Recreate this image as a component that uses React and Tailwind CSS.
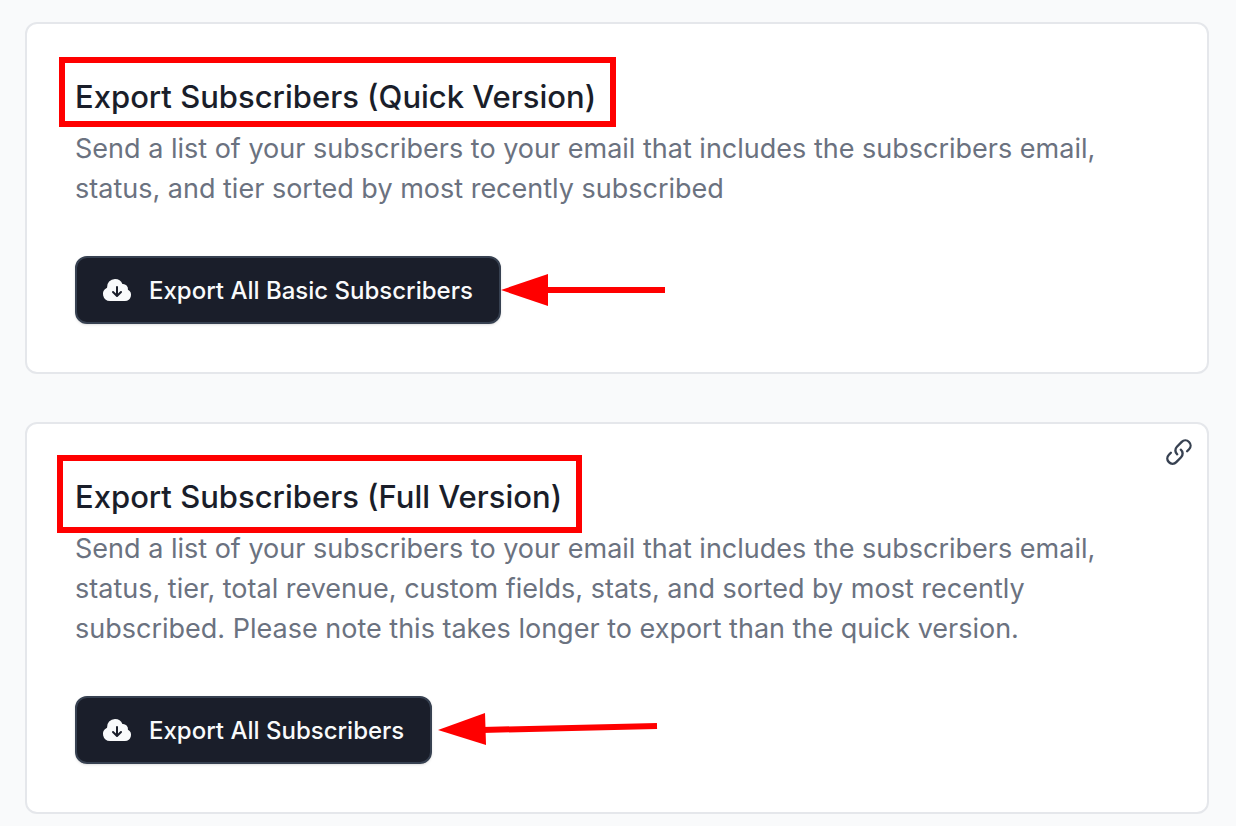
import React from "react";

function CloudIcon() {
  return (
    <svg viewBox="0 0 24 24" className="size-8 shrink-0" fill="currentColor" aria-hidden="true">
      <path fillRule="evenodd" clipRule="evenodd" d="M10.5 3.75a6 6 0 0 0-5.98 6.496A5.25 5.25 0 0 0 6.75 20.25H18a4.5 4.5 0 0 0 2.206-8.423 3.75 3.75 0 0 0-4.133-4.303A6.001 6.001 0 0 0 10.5 3.75Zm2.25 6a.75.75 0 0 0-1.5 0v4.94l-1.72-1.72a.75.75 0 0 0-1.06 1.06l3 3a.75.75 0 0 0 1.06 0l3-3a.75.75 0 1 0-1.06-1.06l-1.72 1.72V9.75Z" />
    </svg>
  );
}

function LinkIcon() {
  return (
    <svg viewBox="0 0 20 20" className="size-8" fill="currentColor" aria-hidden="true">
      <path d="M12.232 4.232a2.5 2.5 0 0 1 3.536 3.536l-1.225 1.224a.75.75 0 0 0 1.061 1.06l1.224-1.224a4 4 0 0 0-5.656-5.656l-3 3a4 4 0 0 0 .225 5.865.75.75 0 0 0 .977-1.138 2.5 2.5 0 0 1-.142-3.667l3-3Z" />
      <path d="M11.603 7.963a.75.75 0 0 0-.977 1.138 2.5 2.5 0 0 1 .142 3.667l-3 3a2.5 2.5 0 0 1-3.536-3.536l1.225-1.224a.75.75 0 0 0-1.061-1.06l-1.224 1.224a4 4 0 1 0 5.656 5.656l3-3a4 4 0 0 0-.225-5.865Z" />
    </svg>
  );
}

function Card({ title, text, action, frame, arrow, link }) {
  return (
    <section className="relative rounded-xl border-2 border-[#e5e7eb] bg-white px-12 pt-[49px] pb-12">
      <h2 className="relative w-fit text-[31px] leading-12 font-medium text-[#1a1e2a]">
        {title}
        <span className={`pointer-events-none absolute border-[6px] border-[#ff0000] ${frame}`} />
      </h2>
      <p className="mt-2 max-w-[1040px] text-[27px] leading-10 text-[#6b7280]">{text}</p>
      <div className="relative mt-[47px] w-fit">
        <button type="button" className="flex h-17 items-center gap-4 rounded-xl border-2 border-[#374151] bg-[#1a1e2a] pr-[26px] pl-6 text-2xl font-medium text-[#f9fafb] shadow-sm">
          <CloudIcon />
          <span className="pt-0.5">{action}</span>
        </button>
        {arrow}
      </div>
      {link && (
        <a href="#full-export" aria-label="Link to full export" className="absolute top-3 right-3 text-[#374151]">
          <LinkIcon />
        </a>
      )}
    </section>
  );
}

export default function App() {
  return (
    <main className="flex min-h-screen flex-col gap-12 bg-[#f9fafb] pt-[22px] pr-[27px] pb-3 pl-[25px] font-['Inter',sans-serif]">
      <Card
        title="Export Subscribers (Quick Version)"
        text="Send a list of your subscribers to your email that includes the subscribers email, status, and tier sorted by most recently subscribed"
        action="Export All Basic Subscribers"
        frame="-top-4 -right-5 -bottom-1.5 -left-4"
        arrow={
          <svg viewBox="0 0 166 36" className="absolute top-4 left-full h-9 w-[166px]" fill="none" aria-hidden="true">
            <path d="M0 18 47 2v32Z" fill="#f00" />
            <path d="M45 18H164" stroke="#f00" strokeWidth="6" />
          </svg>
        }
      />
      <Card
        title="Export Subscribers (Full Version)"
        text="Send a list of your subscribers to your email that includes the subscribers email, status, tier, total revenue, custom fields, stats, and sorted by most recently subscribed. Please note this takes longer to export than the quick version."
        action="Export All Subscribers"
        frame="-top-4.5 -right-5 -bottom-3 -left-4.5"
        arrow={
          <svg viewBox="0 0 226 36" className="absolute top-4 left-full h-9 w-[226px]" fill="none" aria-hidden="true">
            <path d="M6 18 53 1l1 32Z" fill="#f00" />
            <path d="M50 18 225 14" stroke="#f00" strokeWidth="6" />
          </svg>
        }
        link
      />
    </main>
  );
}
